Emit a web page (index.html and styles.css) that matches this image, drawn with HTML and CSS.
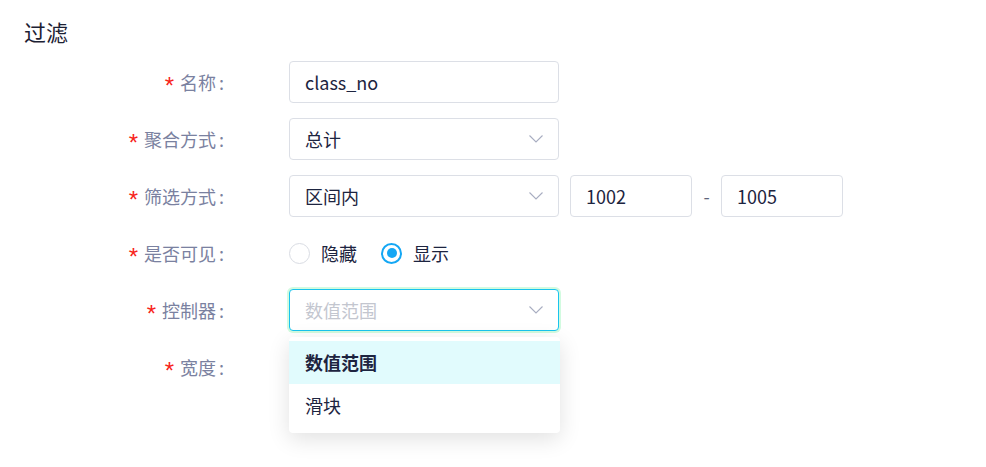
FILE: index.html
```html
<!DOCTYPE html>
<html lang="zh">
<head>
<meta charset="utf-8">
<link rel="stylesheet" href="styles.css">
</head>
<body>
<div class="page">
  <h2 class="title">过滤</h2>
  <div class="form">
    <div class="row">
      <label class="label"><span class="req">*</span>名称<span class="colon">:</span></label>
      <div class="control"><div class="input">class_no</div></div>
    </div>
    <div class="row">
      <label class="label"><span class="req">*</span>聚合方式<span class="colon">:</span></label>
      <div class="control"><div class="input select">总计<svg class="chev" viewBox="0 0 14 8"><path d="M0.5 0.5 L7 7 L13.5 0.5" /></svg></div></div>
    </div>
    <div class="row">
      <label class="label"><span class="req">*</span>筛选方式<span class="colon">:</span></label>
      <div class="control">
        <div class="input select">区间内<svg class="chev" viewBox="0 0 14 8"><path d="M0.5 0.5 L7 7 L13.5 0.5" /></svg></div>
        <div class="input small">1002</div>
        <span class="dash">-</span>
        <div class="input small">1005</div>
      </div>
    </div>
    <div class="row">
      <label class="label"><span class="req">*</span>是否可见<span class="colon">:</span></label>
      <div class="control radios">
        <span class="radio"><span class="dot"></span>隐藏</span>
        <span class="radio on"><span class="dot"></span>显示</span>
      </div>
    </div>
    <div class="row">
      <label class="label"><span class="req">*</span>控制器<span class="colon">:</span></label>
      <div class="control">
        <div class="anchor">
          <div class="input select focus"><span class="ph">数值范围</span><svg class="chev" viewBox="0 0 14 8"><path d="M0.5 0.5 L7 7 L13.5 0.5" /></svg></div>
          <div class="menu">
            <div class="opt active">数值范围</div>
            <div class="opt">滑块</div>
          </div>
        </div>
      </div>
    </div>
    <div class="row">
      <label class="label"><span class="req">*</span>宽度<span class="colon">:</span></label>
      <div class="control"><div class="input"></div></div>
    </div>
  </div>
</div>
</body>
</html>
```

FILE: styles.css
```css
* { box-sizing: border-box; }
html, body { margin: 0; padding: 0; background: #fff; }
body {
  font-family: "Noto Sans CJK SC", "Noto Sans", sans-serif;
  color: #1d2440;
  width: 986px;
  height: 467px;
  overflow: hidden;
}
.page { padding: 17px 24px 0; }
.title {
  margin: 0;
  font-size: 22px;
  line-height: 28px;
  font-weight: 400;
  color: #1c2133;
}
.form {
  margin-top: 16px;
  display: flex;
  flex-direction: column;
  gap: 15px;
}
.row {
  display: flex;
  align-items: center;
  height: 42px;
}
.label {
  width: 200px;
  margin-right: 65px;
  font-size: 18px;
  color: #7a81a0;
  white-space: nowrap;
  display: flex;
  justify-content: flex-end;
  align-items: center;
}
.colon { margin-left: 3px; }
.req {
  color: #f7241b;
  margin-right: 6px;
  font-family: "Liberation Sans", sans-serif;
  font-size: 24px;
  line-height: 1;
  position: relative;
  top: 4px;
}
.control {
  display: flex;
  align-items: center;
}
.input {
  width: 270px;
  height: 42px;
  border: 1px solid #dcdfe6;
  border-radius: 4px;
  padding: 0 15px;
  font-size: 18px;
  display: flex;
  align-items: center;
  color: #1d2440;
  background: #fff;
}
.select { justify-content: space-between; }
.chev {
  width: 14px;
  height: 8px;
  fill: none;
  stroke: #a8adc1;
  stroke-width: 1.1;
}
.small {
  width: 122px;
  margin-left: 11px;
}
.dash {
  width: 29px;
  text-align: center;
  color: #5e647a;
  font-size: 18px;
}
.dash + .small { margin-left: 0; }
.radio {
  display: flex;
  align-items: center;
  font-size: 18px;
  color: #1d2440;
  margin-right: 24px;
}
.dot {
  width: 21px;
  height: 21px;
  border-radius: 50%;
  border: 1px solid #d9dce3;
  margin-right: 11px;
  display: inline-flex;
  align-items: center;
  justify-content: center;
}
.radio.on .dot {
  border: 2px solid #14a7f4;
}
.radio.on .dot::after {
  content: "";
  width: 10px;
  height: 10px;
  border-radius: 50%;
  background: #14a7f4;
}
.anchor { position: relative; }
.focus {
  border-color: #19c4ee;
  box-shadow: 0 0 0 2px #d2fbe0;
}
.ph { color: #c3c6cf; }
.menu {
  position: absolute;
  left: 0;
  top: 48px;
  width: 271px;
  background: #fff;
  border-radius: 4px;
  padding: 4px 0 6px;
  box-shadow: 0 6px 22px rgba(0, 0, 0, 0.12);
  z-index: 2;
}
.opt {
  height: 43px;
  line-height: 43px;
  padding: 0 16px;
  font-size: 18px;
  color: #1d2440;
}
.opt.active {
  background: #e1fbfd;
  font-weight: 700;
}
```
